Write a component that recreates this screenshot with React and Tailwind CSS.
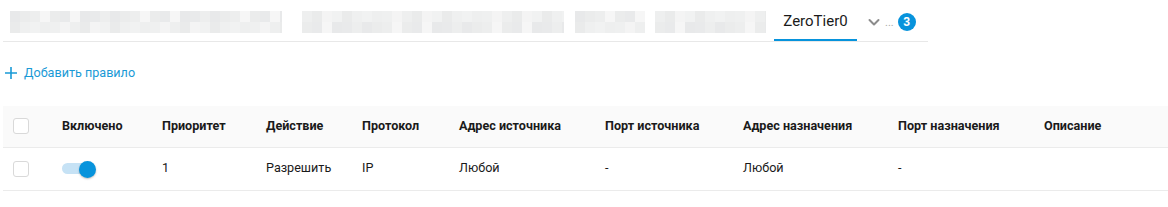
import React from 'react';

// Размытые (скрытые) вкладки — мозаика серых клеток
const GRAYS = ['#eeefef', '#e9eaeb', '#f1f2f2', '#ebecec', '#f4f4f4', '#e8e9ea', '#eff0f0', '#f6f6f6', '#eaebeb', '#edeeee'];

function Mosaic({ width, seed }) {
  const cols = Math.ceil(width / 10);
  const rows = [0, 1];
  return (
    <div className="flex flex-col overflow-hidden" style={{ width }}>
      {rows.map((r) => (
        <div key={r} className="flex h-[11px]">
          {Array.from({ length: cols }).map((_, i) => (
            <div
              key={i}
              className="h-full w-[10px] shrink-0"
              style={{ background: GRAYS[(i * 7 + r * 3 + seed * 5 + ((i * i) % 4)) % GRAYS.length] }}
            />
          ))}
        </div>
      ))}
    </div>
  );
}

const COLUMNS = ['Включено', 'Приоритет', 'Действие', 'Протокол', 'Адрес источника', 'Порт источника', 'Адрес назначения', 'Порт назначения', 'Описание'];

function Checkbox() {
  return <div className="h-4 w-4 rounded-[3px] border border-[#d9d9d9] bg-white" />;
}

function Toggle() {
  return (
    <div className="relative flex h-4 w-[34px] items-center">
      <div className="h-[11px] w-[30px] rounded-full bg-[#c6e2f5]" />
      <div className="absolute right-0 top-0 h-[17px] w-[17px] rounded-full bg-[#0793dc] shadow-[0_1px_2px_rgba(0,0,0,0.25)]" />
    </div>
  );
}

export default function App() {
  const grid = 'grid grid-cols-[59px_100px_104px_96px_97px_146px_138px_155px_146px_1fr] items-center';

  return (
    <div className="h-[207px] w-[1168px] bg-white" style={{ fontFamily: 'Roboto, "Noto Sans", sans-serif' }}>
      {/* вкладки */}
      <div className="ml-[3px] flex h-[42px] w-[925px] items-stretch border-b border-[#e8e8e8] pl-[7px]">
        <div className="mt-[11px]"><Mosaic width={272} seed={1} /></div>
        <div className="ml-[20px] mt-[11px]"><Mosaic width={262} seed={2} /></div>
        <div className="ml-[11px] mt-[11px]"><Mosaic width={70} seed={3} /></div>
        <div className="ml-[10px] mt-[11px]"><Mosaic width={111} seed={4} /></div>
        <div className="ml-[8px] flex w-[83px] items-center justify-center border-b-2 border-[#0793dc] pt-[3px] text-[15px] text-[#1a1a1a]">
          ZeroTier0
        </div>
        <div className="ml-[10px] flex items-center gap-[4px] pt-[3px]">
          <svg width="14" height="14" viewBox="0 0 14 14" fill="none">
            <path d="M2.5 5l4.5 4.5L11.5 5" stroke="#8c8c8c" strokeWidth="2" strokeLinecap="round" strokeLinejoin="round" />
          </svg>
          <span className="text-[11px] leading-none text-[#aaaaaa]">...</span>
          <span className="flex h-[18px] w-[18px] items-center justify-center rounded-full bg-[#0793dc] text-[12px] font-bold text-white">3</span>
        </div>
      </div>

      {/* добавить правило */}
      <div className="ml-[4px] mt-[22px] flex items-center gap-[6px] text-[12.6px] text-[#1a9ad6]">
        <svg width="14" height="14" viewBox="0 0 14 14" fill="none">
          <path d="M7 1v12M1 7h12" stroke="#1a9ad6" strokeWidth="1.6" />
        </svg>
        <span>Добавить правило</span>
      </div>

      {/* таблица */}
      <div className="ml-[3px] mt-[23px]">
        <div className={`${grid} h-[42px] border-b border-[#ebebeb] bg-[#fafafa] text-[12.6px] font-bold text-[#1a1a1a]`}>
          <div className="pl-[10px]"><Checkbox /></div>
          {COLUMNS.map((c) => (
            <div key={c}>{c}</div>
          ))}
        </div>
        <div className={`${grid} h-[43px] border-b border-[#ebebeb] text-[12.6px] text-[#1a1a1a]`}>
          <div className="pl-[10px]"><Checkbox /></div>
          <div><Toggle /></div>
          <div>1</div>
          <div>Разрешить</div>
          <div>IP</div>
          <div>Любой</div>
          <div>-</div>
          <div>Любой</div>
          <div>-</div>
          <div />
        </div>
      </div>
    </div>
  );
}
